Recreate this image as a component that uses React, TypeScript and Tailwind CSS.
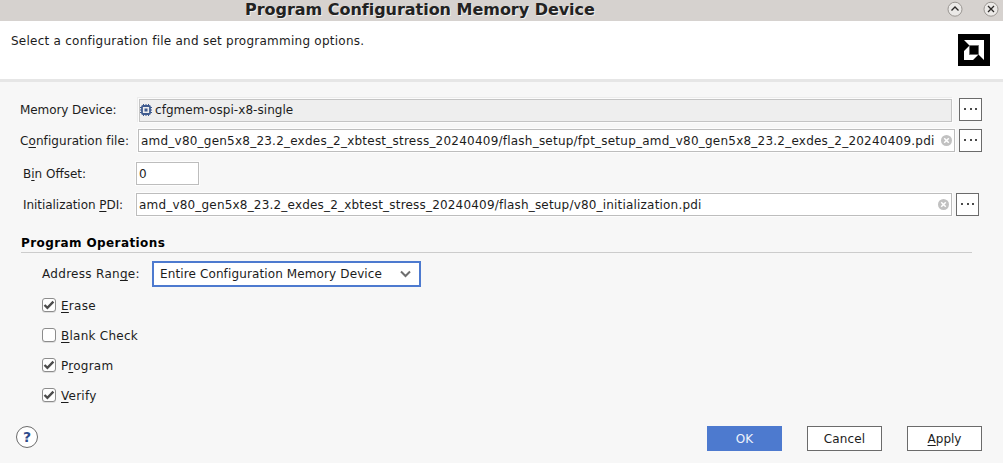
import React from "react";

const U = ({ children }: { children: string }) => (
  <span className="underline decoration-1 underline-offset-[2px] [text-decoration-skip-ink:none]">{children}</span>
);

const Browse = ({ className }: { className: string }) => (
  <button className={`flex h-[23px] w-[23px] shrink-0 items-center justify-center border border-[#6b6b6b] bg-white ${className}`}>
    <svg width="15" height="3" viewBox="0 0 15 3" fill="#4a4a4a" shapeRendering="crispEdges">
      <rect x="1" y="0" width="2" height="2" />
      <rect x="7" y="0" width="2" height="2" />
      <rect x="12" y="0" width="2" height="2" />
    </svg>
  </button>
);

const Clear = () => (
  <svg width="11" height="11" viewBox="0 0 11 11" className="shrink-0">
    <circle cx="5.5" cy="5.5" r="5.5" fill="#c1c1c1" />
    <path d="M3.2 3.2l4.6 4.6M7.8 3.2L3.2 7.8" stroke="#fff" strokeWidth="1.5" />
  </svg>
);

const Chip = () => (
  <svg width="12" height="12" viewBox="0 0 12 12" fill="none" stroke="#3f5b8f" className="shrink-0">
    <rect x="2" y="2" width="8" height="8" rx="1" strokeWidth="1.8" />
    <rect x="4.5" y="4.5" width="3" height="3" fill="#3f5b8f" stroke="none" />
    <path d="M3.5 0v2M6 0v2M8.5 0v2M3.5 10v2M6 10v2M8.5 10v2M0 3.5h2M0 6h2M0 8.5h2M10 3.5h2M10 6h2M10 8.5h2" />
  </svg>
);

const Check = ({ checked, children }: { checked: boolean; children: React.ReactNode }) => (
  <label className="flex h-[30px] items-center">
    <span className="flex h-[14px] w-[14px] items-center justify-center rounded-[3px] border border-[#8c8c8c] bg-white shadow-[0_1px_0_#dedede]">
      {checked && (
        <svg width="12" height="12" viewBox="0 0 12 12" className="shrink-0" fill="none" stroke="#4d4d4d" strokeWidth="2.4">
          <path d="M1.5 6L4.4 8.8L10.4 2.6" />
        </svg>
      )}
    </span>
    <span className="ml-[5px] pt-[2px] tracking-[0.25px]">{children}</span>
  </label>
);

const WindowButton = ({ d, className }: { d: string; className: string }) => (
  <svg width="16" height="16" viewBox="0 0 16 16" className={className} fill="none">
    <circle cx="8" cy="8.2" r="7" fill="#ebe9e7" stroke="#9a9692" />
    <path d={d} stroke="#2c2a28" strokeWidth="1.3" />
  </svg>
);

export default function App() {
  return (
    <div className="flex h-[463px] w-[1003px] flex-col overflow-hidden bg-[#f7f7f7] font-['DejaVu_Sans',sans-serif] text-[12px] leading-[16px] whitespace-nowrap text-[#1c1c1c]">
      <div className="flex h-[21px] shrink-0 items-start bg-[#d6d2cf]">
        <div className="ml-[245px] w-[702px] text-[16px] leading-[19px] font-bold tracking-[-0.03px] text-[#222] [text-shadow:1px_1px_0_#f0eeec]">Program Configuration Memory Device</div>
        <WindowButton d="M4.5 9.5L8 6l3.5 3.5" className="mt-[1px] shrink-0" />
        <WindowButton d="M5 5l6 6M11 5l-6 6" className="mt-[1px] ml-[20px] shrink-0" />
      </div>
      <div className="flex h-[61px] shrink-0 justify-between border-b-[3px] border-[#e6e6e6] bg-white pr-[13px] pl-[11px]">
        <span className="mt-[12px] tracking-[0.25px]">Select a configuration file and set programming options.</span>
        <svg width="32" height="32" viewBox="0 0 32 32" className="mt-[13px]">
          <rect width="32" height="32" fill="#000" />
          <path d="M6 6h20v20l-5.5-5.5v-9h-9z" fill="#fff" />
          <path d="M11.5 11.5L6 17v9h9l5.500-5.500h-9z" fill="#fff" />
          <rect x="11.500" y="11.500" width="9" height="9" fill="#000" stroke="#777" strokeWidth="0.8" />
        </svg>
      </div>

      <div className="mt-[16px] flex h-[24px] shrink-0 pl-[20px]">
        <span className="mt-[4px] w-[119px] tracking-[-0.09px]">Memory Device:</span>
        <div className="mt-px flex h-[23px] w-[813px] items-center border border-[#c4c4c4] bg-[#eeeeee] pb-[2px] shadow-[0_0_0_1px_#fcfcfc,-1px_-1px_0_1px_#ececec]">
          <Chip />
          <span className="ml-[3px] tracking-[0.05px]">cfgmem-ospi-x8-single</span>
        </div>
        <Browse className="ml-[7px]" />
      </div>
      <div className="mt-[7px] flex h-[23px] shrink-0 pl-[20px]">
        <span className="mt-[4px] w-[118px] tracking-[0.08px]">C<U>o</U>nfiguration file:</span>
        <div className="flex w-[817px] items-center justify-between border border-[#bdbdbd] bg-white pr-[2px] pl-[2px] shadow-[0_0_0_1px_#fdfdfd]">
          <span className="tracking-[0.225px]">amd_v80_gen5x8_23.2_exdes_2_xbtest_stress_20240409/flash_setup/fpt_setup_amd_v80_gen5x8_23.2_exdes_2_20240409.pdi</span>
          <Clear />
        </div>
        <Browse className="ml-[4px]" />
      </div>
      <div className="mt-[10px] flex h-[23px] shrink-0 pl-[23px]">
        <span className="mt-[4px] w-[113px]">B<U>i</U>n Offset:</span>
        <div className="flex w-[63px] items-center border border-[#bdbdbd] bg-white pl-[2px] shadow-[0_0_0_1px_#fdfdfd]">0</div>
      </div>
      <div className="mt-[8px] flex h-[23px] shrink-0 pl-[23px]">
        <span className="mt-[4px] w-[113px] tracking-[-0.05px]">Initialization <U>P</U>DI:</span>
        <div className="flex w-[816px] items-center justify-between border border-[#bdbdbd] bg-white pr-[2px] pl-[2px] shadow-[0_0_0_1px_#fdfdfd]">
          <span className="tracking-[0.19px]">amd_v80_gen5x8_23.2_exdes_2_xbtest_stress_20240409/flash_setup/v80_initialization.pdi</span>
          <Clear />
        </div>
        <Browse className="ml-[4px]" />
      </div>

      <h2 className="mt-[18px] ml-[21px] h-[19px] w-[951px] shrink-0 border-b border-[#cccccc] pt-px font-bold tracking-[0.4px] text-black">Program Operations</h2>

      <div className="mt-[8px] flex h-[26px] shrink-0 pl-[42px]">
        <span className="mt-[5px] w-[110px] tracking-[0.3px]">Address Ran<U>g</U>e:</span>
        <div className="flex w-[269px] items-center justify-between border-2 border-[#4d7acf] bg-white pr-[8px] pl-[6px]">
          <span className="tracking-[0.12px]">Entire Configuration Memory Device</span>
          <svg width="11" height="8" viewBox="0 0 11 8" fill="none" stroke="#6e6e6e" strokeWidth="2"><path d="M1 1.5l4.5 4.500L10 1.5" /></svg>
        </div>
      </div>
      <div className="mt-[3px] shrink-0 pl-[42px]">
        <Check checked><U>E</U>rase</Check>
        <Check checked={false}><U>B</U>lank Check</Check>
        <Check checked>P<U>r</U>ogram</Check>
        <Check checked><U>V</U>erify</Check>
      </div>

      <div className="mt-[16px] flex h-[25px] shrink-0 pl-[16px]">
        <button className="flex h-[22px] w-[22px] items-center justify-center rounded-full border border-[#6b6b6b] bg-white text-[14px] font-bold text-[#2f4c8c]">?</button>
        <button className="ml-[669px] w-[75px] bg-[#4d7acf] text-[#eef3fc]">OK</button>
        <button className="ml-[25px] w-[75px] border border-[#6b6b6b] bg-white tracking-[0.15px]">Cancel</button>
        <button className="ml-[25px] w-[75px] border border-[#6b6b6b] bg-white"><U>A</U>pply</button>
      </div>
    </div>
  );
}
